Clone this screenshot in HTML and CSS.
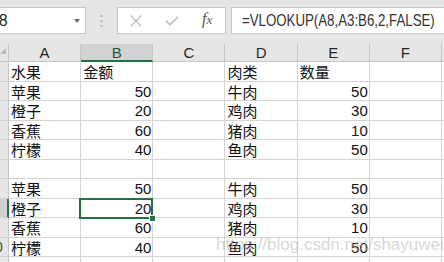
FILE: index.html
```html
<!DOCTYPE html>
<html>
<head>
<meta charset="utf-8">
<link rel="stylesheet" href="styles.css">
</head>
<body>
<div class="app">
  <div class="toolbar">
    <div class="namebox">
      <span class="nb-text">B8</span>
      <span class="nb-arrow"></span>
    </div>
    <div class="sep">
      <svg width="3" height="12" viewBox="0 0 3 12"><rect x="0.5" y="0" width="2" height="2" fill="#b3b3b3"/><rect x="0.5" y="5" width="2" height="2" fill="#b3b3b3"/><rect x="0.5" y="10" width="2" height="2" fill="#b3b3b3"/></svg>
    </div>
    <div class="fxbox">
      <span class="slot"><svg width="12" height="12" viewBox="0 0 12 12"><path d="M0.5 0.5 L11.5 11.5 M11.5 0.5 L0.5 11.5" stroke="#bfbfbf" stroke-width="1.3" fill="none"/></svg></span>
      <span class="slot"><svg width="14" height="10" viewBox="0 0 14 10"><path d="M0.8 4.8 L5 8.6 L13.2 0.8" stroke="#c6c6c6" stroke-width="2" fill="none"/></svg></span>
      <span class="slot fx"><i>f</i><i class="fx-x">x</i></span>
    </div>
    <div class="formula"><span class="formula-text">=VLOOKUP(A8,A3:B6,2,FALSE)</span></div>
  </div>

  <div class="grid">
    <div class="corner"><span class="corner-tri"></span></div>
    <div class="hd">A</div><div class="hd sel">B</div><div class="hd">C</div><div class="hd">D</div><div class="hd">E</div><div class="hd">F</div><div class="hd"></div>

    <div class="rh"><span>1</span></div>
    <div class="c">水果</div><div class="c">金额</div><div class="c"></div><div class="c">肉类</div><div class="c">数量</div><div class="c"></div><div class="c"></div>

    <div class="rh"><span>2</span></div>
    <div class="c">苹果</div><div class="c n">50</div><div class="c"></div><div class="c">牛肉</div><div class="c n">50</div><div class="c"></div><div class="c"></div>

    <div class="rh"><span>3</span></div>
    <div class="c">橙子</div><div class="c n">20</div><div class="c"></div><div class="c">鸡肉</div><div class="c n">30</div><div class="c"></div><div class="c"></div>

    <div class="rh"><span>4</span></div>
    <div class="c">香蕉</div><div class="c n">60</div><div class="c"></div><div class="c">猪肉</div><div class="c n">10</div><div class="c"></div><div class="c"></div>

    <div class="rh"><span>5</span></div>
    <div class="c">柠檬</div><div class="c n">40</div><div class="c"></div><div class="c">鱼肉</div><div class="c n">50</div><div class="c"></div><div class="c"></div>

    <div class="rh"><span>6</span></div>
    <div class="c"></div><div class="c"></div><div class="c"></div><div class="c"></div><div class="c"></div><div class="c"></div><div class="c"></div>

    <div class="rh"><span>7</span></div>
    <div class="c">苹果</div><div class="c n">50</div><div class="c"></div><div class="c">牛肉</div><div class="c n">50</div><div class="c"></div><div class="c"></div>

    <div class="rh sel"><span>8</span></div>
    <div class="c">橙子</div><div class="c n sel">20</div><div class="c"></div><div class="c">鸡肉</div><div class="c n">30</div><div class="c"></div><div class="c"></div>

    <div class="rh"><span>9</span></div>
    <div class="c">香蕉</div><div class="c n">60</div><div class="c"></div><div class="c">猪肉</div><div class="c n">10</div><div class="c"></div><div class="c"></div>

    <div class="rh"><span>10</span></div>
    <div class="c">柠檬</div><div class="c n">40</div><div class="c"></div><div class="c">鱼肉</div><div class="c n">50</div><div class="c"></div><div class="c"></div>

    <div class="rh"><span>11</span></div>
    <div class="c"></div><div class="c"></div><div class="c"></div><div class="c"></div><div class="c"></div><div class="c"></div><div class="c"></div>
  </div>

  <div class="watermark">https://blog.csdn.net/shayuwei</div>
</div>
</body>
</html>
```

FILE: styles.css
```css
html, body {
  margin: 0;
  padding: 0;
  background: #ffffff;
}

.app {
  position: relative;
  width: 444px;
  height: 262px;
  overflow: hidden;
  background: #ffffff;
}

/* ---------- formula toolbar ---------- */
.toolbar {
  height: 44px;
  box-sizing: border-box;
  padding-top: 7px;
  background: #e6e6e6;
  display: flex;
  align-items: flex-start;
}

.namebox {
  margin-left: -16px;
  width: 102px;
  height: 27px;
  box-sizing: border-box;
  border: 1px solid #c6c6c6;
  background: #ffffff;
  display: flex;
  align-items: center;
  padding-left: 3px;
}

.nb-text {
  font-family: "Liberation Sans", Arial, sans-serif;
  font-size: 16px;
  color: #262626;
}

.nb-arrow {
  margin-left: auto;
  margin-right: 5px;
  width: 0;
  height: 0;
  border-left: 3.5px solid transparent;
  border-right: 3.5px solid transparent;
  border-top: 4px solid #707070;
}

.sep {
  width: 31px;
  height: 27px;
  display: flex;
  align-items: center;
  justify-content: center;
}

.fxbox {
  width: 109px;
  height: 27px;
  box-sizing: border-box;
  border: 1px solid #c6c6c6;
  background: #ffffff;
  display: flex;
  align-items: center;
}

.slot {
  width: 36px;
  height: 25px;
  display: flex;
  align-items: center;
  justify-content: center;
}

.fx {
  font-family: "Liberation Serif", "Times New Roman", serif;
  font-size: 16px;
  color: #555555;
  align-items: baseline;
  padding-top: 2px;
  box-sizing: border-box;
}

.fx i {
  font-style: italic;
}

.fx-x {
  font-size: 13px;
}

.formula {
  flex: 1;
  margin-left: 5px;
  margin-right: -10px;
  height: 27px;
  box-sizing: border-box;
  border: 1px solid #c6c6c6;
  background: #ffffff;
  display: flex;
  align-items: center;
  padding-left: 10px;
  overflow: hidden;
}

.formula-text {
  display: inline-block;
  font-family: "Liberation Sans", Arial, sans-serif;
  font-size: 17px;
  color: #333333;
  white-space: nowrap;
  transform: scaleX(0.78);
  transform-origin: left center;
}

/* ---------- grid ---------- */
.grid {
  display: grid;
  grid-template-columns: 9px repeat(6, 72.17px) 40px;
  grid-template-rows: 18px repeat(11, 19.5px);
  font-family: "Liberation Sans", Arial, "Noto Sans CJK SC", sans-serif;
}

.grid > div {
  box-sizing: border-box;
  overflow: hidden;
  white-space: nowrap;
}

.corner {
  background: #e6e6e6;
  border-right: 1px solid #c6c6c6;
  border-bottom: 1px solid #c6c6c6;
  position: relative;
}

.corner-tri {
  position: absolute;
  right: 2px;
  bottom: 7px;
  width: 0;
  height: 0;
  border-left: 6px solid transparent;
  border-bottom: 6px solid #b8b8b8;
}

.hd {
  background: #e6e6e6;
  border-right: 1px solid #c6c6c6;
  border-bottom: 1px solid #c6c6c6;
  font-size: 15px;
  line-height: 17px;
  text-align: center;
  color: #262626;
}

.hd.sel {
  background: #d2d2d2;
  border-bottom: 2px solid #217346;
  color: #1a5a36;
}

.rh {
  background: #e6e6e6;
  border-right: 1px solid #c6c6c6;
  border-bottom: 1px solid #d0d0d0;
  font-size: 14px;
  line-height: 19px;
  color: #444444;
}

.rh span {
  display: block;
  width: 30px;
  margin-left: -20px;
  text-align: center;
}

.rh.sel {
  background: #d2d2d2;
  border-right: 2px solid #217346;
  color: #1a5a36;
}

.c {
  border-right: 1px solid #d4d4d4;
  border-bottom: 1px solid #d4d4d4;
  font-family: "Noto Sans CJK SC", "Liberation Sans", sans-serif;
  font-size: 15px;
  line-height: 19px;
  padding-left: 2px;
  color: #111111;
}

.c.n {
  font-family: "Liberation Sans", Arial, sans-serif;
  text-align: right;
  padding-left: 0;
  padding-right: 1px;
}

.c.sel {
  position: relative;
  overflow: visible;
  z-index: 2;
}

.c.sel::after {
  content: "";
  position: absolute;
  top: -1px;
  left: -2px;
  right: -1px;
  bottom: -2px;
  border: 2px solid #217346;
}

.c.sel::before {
  content: "";
  position: absolute;
  right: -4px;
  bottom: -5px;
  width: 5px;
  height: 5px;
  background: #217346;
  border: 1px solid #ffffff;
  z-index: 3;
}

/* ---------- watermark ---------- */
.watermark {
  position: absolute;
  left: 216px;
  top: 236px;
  font-family: "Liberation Sans", Arial, sans-serif;
  font-size: 17px;
  line-height: 17px;
  color: rgba(175, 175, 175, 0.5);
  white-space: nowrap;
  pointer-events: none;
}
```
